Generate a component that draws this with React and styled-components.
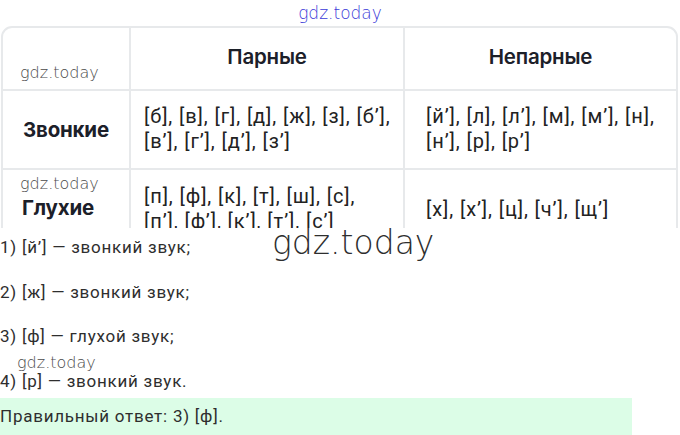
import React from "react";
import styled, { createGlobalStyle } from "styled-components";

const GlobalStyle = createGlobalStyle`
  html, body { margin: 0; padding: 0; background: #ffffff; }
  body { font-family: Roboto, "Liberation Sans", Arial, sans-serif; color: #2b2b2b; }
`;

const Page = styled.div`
  position: relative;
  width: 680px;
  height: 435px;
  overflow: hidden;
  background: #fff;
`;

const Mark = styled.div`
  font-family: "DejaVu Sans", sans-serif;
  font-weight: 200;
  font-size: ${(p) => p.$size || 16}px;
  line-height: 1;
  color: ${(p) => p.$color || "#4a4a4a"};
  white-space: nowrap;
`;

const TopMark = styled(Mark)`
  height: 26px;
  display: flex;
  justify-content: center;
  align-items: flex-start;
  padding-top: 5px;
  box-sizing: border-box;
`;

const FloatMark = styled(Mark)`
  position: absolute;
  left: ${(p) => p.$x}px;
  top: ${(p) => p.$y}px;
`;

const TableClip = styled.div`
  height: 202px;
  overflow: hidden;
  padding: 0 2px 0 1px;
`;

const Table = styled.div`
  display: grid;
  grid-template-columns: 128px 274px 1fr;
  grid-template-rows: 63px 79px 80px;
  border: 2px solid #e7e9eb;
  border-radius: 11px;
`;

const Cell = styled.div`
  border-right: ${(p) => (p.$last ? "none" : "2px solid #e7e9eb")};
  border-bottom: ${(p) => (p.$bottom ? "none" : "2px solid #e7e9eb")};
  display: flex;
  flex-direction: column;
  justify-content: ${(p) => p.$justify || "center"};
  align-items: ${(p) => p.$align || "flex-start"};
  padding: ${(p) => p.$pad || "0 0 0 13px"};
  box-sizing: border-box;
`;

const HeadText = styled.div`
  font-family: Inter, "Noto Sans", sans-serif;
  font-weight: 600;
  font-size: 20.5px;
  color: #1c2029;
  letter-spacing: -0.2px;
`;

const RowTitle = styled(HeadText)`
  font-size: 20.5px;
  font-weight: 700;
`;

const CellText = styled.div`
  font-family: Roboto, "Liberation Sans", sans-serif;
  font-size: 20px;
  line-height: 25px;
  letter-spacing: 0.9px;
  color: #222;
`;

const List = styled.div`
  display: flex;
  flex-direction: column;
  gap: 22.5px;
  padding-top: 8px;
`;

const Item = styled.p`
  margin: 0;
  font-family: Roboto, "Liberation Sans", sans-serif;
  font-size: 17px;
  line-height: 22px;
  letter-spacing: 0.75px;
  color: #2e2e2e;
`;

const Answer = styled.div`
  margin-top: 6px;
  width: 632px;
  height: 40px;
  background: #dcfde7;
  font-family: Roboto, "Liberation Sans", sans-serif;
  font-size: 17px;
  line-height: 22px;
  letter-spacing: 0.75px;
  color: #2e2e2e;
  padding-top: 7px;
  box-sizing: border-box;
`;

export default function App() {
  return (
    <Page>
      <GlobalStyle />
      <TopMark $size={17} $color="#3a3ad8">gdz.today</TopMark>
      <TableClip>
        <Table>
          <Cell $justify="flex-end" $pad="0 0 8px 17px">
            <Mark $size={16}>gdz.today</Mark>
          </Cell>
          <Cell $align="center" $pad="0 0 4px 0">
            <HeadText>Парные</HeadText>
          </Cell>
          <Cell $last $align="center" $pad="0 0 4px 0">
            <HeadText>Непарные</HeadText>
          </Cell>

          <Cell $pad="0 0 0 20px">
            <RowTitle>Звонкие</RowTitle>
          </Cell>
          <Cell $pad="0 0 2px 13px">
            <CellText>
              [б], [в], [г], [д], [ж], [з], [б’],
              <br />
              [в’], [г’], [д’], [з’]
            </CellText>
          </Cell>
          <Cell $last $pad="0 0 2px 21px">
            <CellText>
              [й’], [л], [л’], [м], [м’], [н],
              <br />
              [н’], [р], [р’]
            </CellText>
          </Cell>

          <Cell $bottom $justify="flex-start" $pad="6px 0 0 17px">
            <Mark $size={16}>gdz.today</Mark>
            <RowTitle style={{ marginTop: 3, marginLeft: 2 }}>Глухие</RowTitle>
          </Cell>
          <Cell $bottom $pad="0 0 2px 13px">
            <CellText>
              [п], [ф], [к], [т], [ш], [с],
              <br />
              [п’], [ф’], [к’], [т’], [с’]
            </CellText>
          </Cell>
          <Cell $bottom $last $pad="0 0 2px 21px">
            <CellText>[х], [х’], [ц], [ч’], [щ’]</CellText>
          </Cell>
        </Table>
      </TableClip>
      <List>
        <Item>1) [й’] — звонкий звук;</Item>
        <Item>2) [ж] — звонкий звук;</Item>
        <Item>3) [ф] — глухой звук;</Item>
        <Item>4) [р] — звонкий звук.</Item>
      </List>
      <Answer>Правильный ответ: 3) [ф].</Answer>
      <FloatMark $x={272} $y={226} $size={33} $color="#2e2e2e">gdz.today</FloatMark>
      <FloatMark $x={17} $y={355} $size={16}>gdz.today</FloatMark>
    </Page>
  );
}
